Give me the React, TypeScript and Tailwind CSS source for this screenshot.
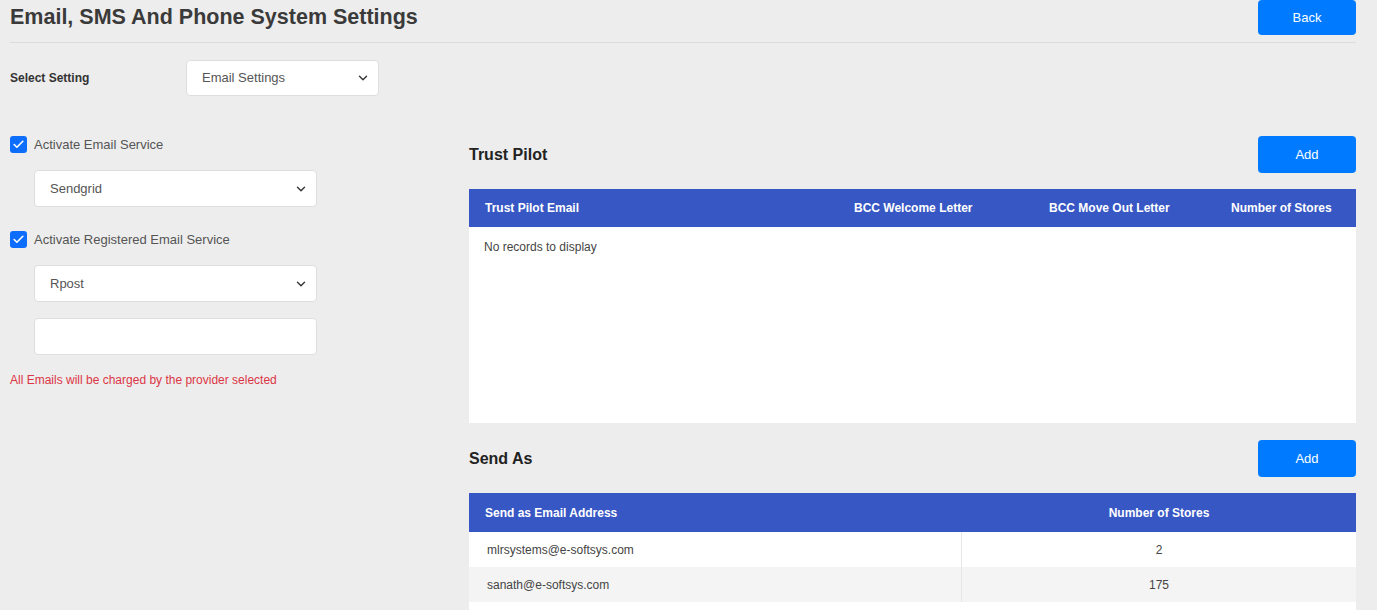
import { ChevronDown, Check } from "lucide-react";

const font = { fontFamily: '"Liberation Sans", Arial, sans-serif' };

const SelectBox = ({ value, className }: { value: string; className: string }) => (
  <div className={`flex items-center justify-between bg-white border border-[#dedede] rounded-[4px] pl-[15px] pr-[8px] ${className}`}>
    <span className="text-[13px] text-[#555]">{value}</span>
    <ChevronDown className="h-[14px] w-[14px] text-[#333]" strokeWidth={2.4} />
  </div>
);

const CheckRow = ({ label }: { label: string }) => (
  <div className="flex items-center gap-[7px] h-[17px]">
    <div className="w-[17px] h-[17px] rounded-[3px] bg-[#0d6efd] flex items-center justify-center">
      <Check className="h-[13px] w-[13px] text-white" strokeWidth={3} />
    </div>
    <span className="text-[13px] text-[#555]">{label}</span>
  </div>
);

const AddButton = () => (
  <button className="w-[98px] h-[37px] rounded-[4px] bg-[#007bff] text-white text-[13px]">Add</button>
);

const App = () => {
  const sendAs = [
    { email: "mlrsystems@e-softsys.com", stores: 2 },
    { email: "sanath@e-softsys.com", stores: 175 },
  ];

  return (
    <div className="w-[1377px] h-[610px] overflow-hidden bg-[#ededed]" style={font}>
      <div className="w-[1356px] pl-[10px]">
        {/* header */}
        <div className="flex items-start justify-between h-[43px] border-b border-[#dcdcdc]">
          <h1 className="pt-[1px] text-[21.5px] font-bold text-[#3a3a3a]">Email, SMS And Phone System Settings</h1>
          <button className="w-[98px] h-[35px] rounded-[4px] bg-[#007bff] text-white text-[13px]">Back</button>
        </div>

        <div className="flex items-center h-[36px] mt-[17px]">
          <span className="w-[176px] text-[12px] font-bold text-[#333]">Select Setting</span>
          <SelectBox value="Email Settings" className="w-[193px] h-[36px]" />
        </div>

        <div className="flex mt-[40px]">
          {/* left column */}
          <div className="w-[459px] flex flex-col">
            <CheckRow label="Activate Email Service" />
            <SelectBox value="Sendgrid" className="ml-[24px] mt-[17px] w-[283px] h-[37px]" />
            <div className="mt-[24px]">
              <CheckRow label="Activate Registered Email Service" />
            </div>
            <SelectBox value="Rpost" className="ml-[24px] mt-[17px] w-[283px] h-[37px]" />
            <div className="ml-[24px] mt-[16px] w-[283px] h-[37px] bg-white border border-[#dedede] rounded-[4px]" />
            <p className="mt-[16px] text-[12px] text-[#dc3545]">All Emails will be charged by the provider selected</p>
          </div>

          {/* right column */}
          <div className="flex-1 flex flex-col">
            <div className="flex items-center justify-between h-[37px]">
              <h2 className="text-[16px] font-bold text-[#222]">Trust Pilot</h2>
              <AddButton />
            </div>
            <div className="mt-[16px] bg-white h-[234px]">
              <div className="grid grid-cols-[369px_195px_182px_1fr] items-center h-[38px] bg-[#3757c4] text-white text-[12px] font-bold">
                <span className="pl-[16px]">Trust Pilot Email</span>
                <span className="pl-[16px]">BCC Welcome Letter</span>
                <span className="pl-[16px]">BCC Move Out Letter</span>
                <span className="pl-[16px]">Number of Stores</span>
              </div>
              <p className="pl-[15px] pt-[11px] text-[12px] text-[#444]">No records to display</p>
            </div>

            <div className="flex items-center justify-between h-[37px] mt-[17px]">
              <h2 className="text-[16px] font-bold text-[#222]">Send As</h2>
              <AddButton />
            </div>
            <div className="mt-[16px] bg-white h-[120px]">
              <div className="grid grid-cols-[493px_1fr] items-center h-[39px] bg-[#3757c4] text-white text-[12px] font-bold">
                <span className="pl-[16px]">Send as Email Address</span>
                <span className="text-center">Number of Stores</span>
              </div>
              {sendAs.map((row, i) => (
                <div
                  key={row.email}
                  className={`grid grid-cols-[493px_1fr] items-center h-[35px] text-[12px] text-[#444] ${i % 2 === 1 ? "bg-[#f4f4f4]" : "bg-white"}`}
                >
                  <span className="pl-[18px] h-full flex items-center border-r border-[#e6e6e6]">{row.email}</span>
                  <span className="text-center">{row.stores}</span>
                </div>
              ))}
            </div>
          </div>
        </div>
      </div>
    </div>
  );
};

export default App;
